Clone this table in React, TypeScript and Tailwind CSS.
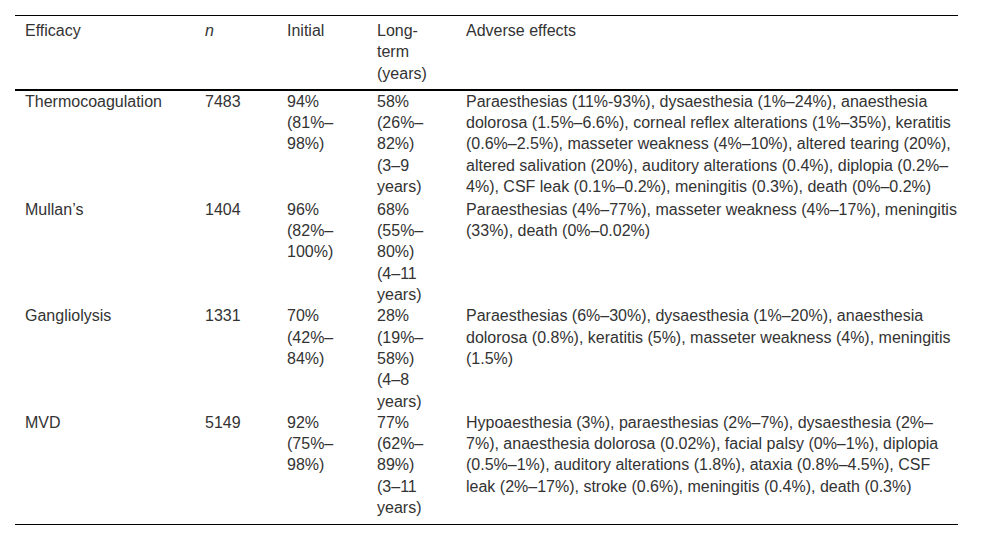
const rows = [
  {
    name: "Thermocoagulation",
    n: "7483",
    initial: "94% (81%–98%)",
    longTerm: "58% (26%–82%) (3–9 years)",
    adverse:
      "Paraesthesias (11%-93%), dysaesthesia (1%–24%), anaesthesia dolorosa (1.5%–6.6%), corneal reflex alterations (1%–35%), keratitis (0.6%–2.5%), masseter weakness (4%–10%), altered tearing (20%), altered salivation (20%), auditory alterations (0.4%), diplopia (0.2%–4%), CSF leak (0.1%–0.2%), meningitis (0.3%), death (0%–0.2%)",
  },
  {
    name: "Mullan’s",
    n: "1404",
    initial: "96% (82%–100%)",
    longTerm: "68% (55%–80%) (4–11 years)",
    adverse: "Paraesthesias (4%–77%), masseter weakness (4%–17%), meningitis (33%), death (0%–0.02%)",
  },
  {
    name: "Gangliolysis",
    n: "1331",
    initial: "70% (42%–84%)",
    longTerm: "28% (19%–58%) (4–8 years)",
    adverse:
      "Paraesthesias (6%–30%), dysaesthesia (1%–20%), anaesthesia dolorosa (0.8%), keratitis (5%), masseter weakness (4%), meningitis (1.5%)",
  },
  {
    name: "MVD",
    n: "5149",
    initial: "92% (75%–98%)",
    longTerm: "77% (62%–89%) (3–11 years)",
    adverse:
      "Hypoaesthesia (3%), paraesthesias (2%–7%), dysaesthesia (2%–7%), anaesthesia dolorosa (0.02%), facial palsy (0%–1%), diplopia (0.5%–1%), auditory alterations (1.8%), ataxia (0.8%–4.5%), CSF leak (2%–17%), stroke (0.6%), meningitis (0.4%), death (0.3%)",
  },
]

export default function App() {
  return (
    <div className="min-h-[540px] bg-white pt-[15px] pl-[15px] font-['Liberation_Sans',Arial,sans-serif] text-[16px] leading-[21.3px] text-[#333]">
      <table className="w-[943px] table-fixed border-collapse border-t border-b border-black">
        <colgroup>
          <col className="w-[180px]" />
          <col className="w-[82px]" />
          <col className="w-[90px]" />
          <col className="w-[89px]" />
          <col className="w-[502px]" />
        </colgroup>
        <thead>
          <tr className="border-b-2 border-black align-top text-left">
            <th className="pl-[10px] pr-[10px] pt-[4px] pb-[5px] font-normal">Efficacy</th>
            <th className="pl-[10px] pr-[10px] pt-[4px] pb-[5px] font-normal italic">n</th>
            <th className="pl-[10px] pr-[10px] pt-[4px] pb-[5px] font-normal">Initial</th>
            <th className="pl-[10px] pr-[20px] pt-[4px] pb-[5px] font-normal">Long-term (years)</th>
            <th className="pl-[10px] pr-0 pt-[4px] pb-[5px] font-normal">Adverse effects</th>
          </tr>
        </thead>
        <tbody>
          {rows.map((r, i) => (
            <tr key={r.name} className={`align-top ${i === 0 ? "[&>td]:pb-[1.5px]" : ""} ${i === rows.length - 1 ? "[&>td]:pb-[6px]" : ""}`}>
              <td className="pl-[10px] pr-[10px]">{r.name}</td>
              <td className="pl-[10px] pr-[10px]">{r.n}</td>
              <td className="pl-[10px] pr-[10px]">{r.initial}</td>
              <td className="pl-[10px] pr-[20px]">{r.longTerm}</td>
              <td className="pl-[10px] pr-0">{r.adverse}</td>
            </tr>
          ))}
        </tbody>
      </table>
    </div>
  )
}
